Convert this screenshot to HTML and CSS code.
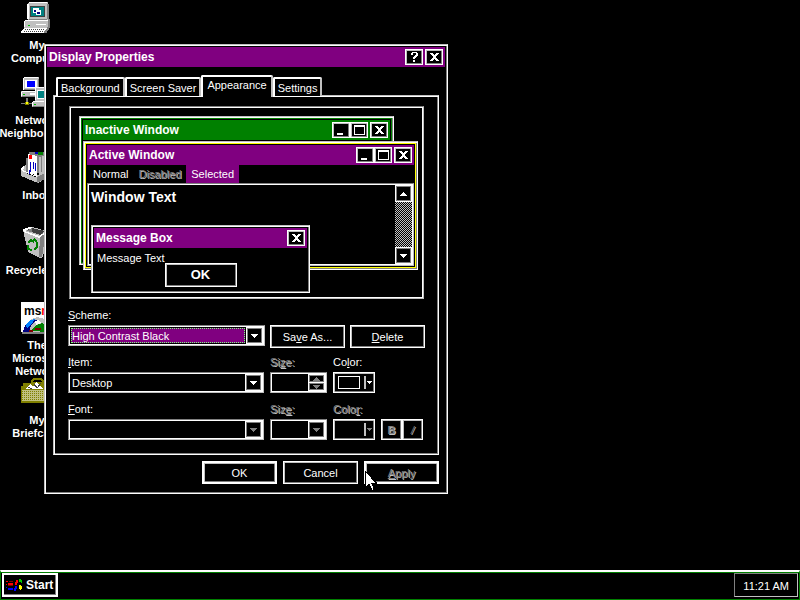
FILE: index.html
```html
<!DOCTYPE html>
<html lang="en">
<head>
<meta charset="utf-8">
<title>Display Properties</title>
<link rel="stylesheet" href="styles.css">
</head>
<body>
<svg class="defs" aria-hidden="true">
  <symbol id="g-min" viewBox="0 0 14 12"><path d="M3 9h6v2H3z"/></symbol>
  <symbol id="g-max" viewBox="0 0 14 12"><path d="M2 1h11v10H2zM3 3v7h9V3z" fill-rule="evenodd"/></symbol>
  <symbol id="g-close" viewBox="0 0 14 12"><path d="M3 2h3v1h1v1h1V3h1V2h3v1h-1v1h-1v1H9v2h1v1h1v1h1v1H9V9H8V8H7v1H6v1H3V9h1V8h1V7h1V5H5V4H4V3H3z"/></symbol>
  <symbol id="g-help" viewBox="0 0 14 12"><path d="M5 1h5v1h1v3h-1v1H9v1H8v1H6V6h1V5h1V4h1V2H6v2H4V2h1zM6 9h2v2H6z"/></symbol>
  <symbol id="g-down" viewBox="0 0 7 4"><path d="M0 0h7v1H6v1H5v1H4v1H3V3H2V2H1V1H0z"/></symbol>
  <symbol id="g-up" viewBox="0 0 7 4"><path d="M3 0h1v1h1v1h1v1h1v1H0V3h1V2h1V1h1z"/></symbol>
  <symbol id="g-small" viewBox="0 0 5 3"><path d="M0 0h5v1H4v1H3v1H2V2H1V1H0z"/></symbol>
</svg>

<main class="desktop">
  <ul class="icons">
    <li><a href="#computer">
      <svg class="icon" viewBox="0 0 32 32" aria-hidden="true">
        <path fill="#c0c0c0" d="M8 0h19v18H7V1h1z"/><path fill="#fff" d="M8 0h18v1H8v16H6V2h2z"/><path fill="#808080" d="M26 2h2v15h-2zM8 17h18v1H8z"/>
        <path fill="#404040" d="M9 4h15v11H9z"/><path fill="#008080" d="M10 5h13v9H10z"/><path fill="#fff" d="M12 6h6v5h-6zM15 8h5v5h-5z"/><path fill="#000080" d="M13 8h2v2h-2zM16 10h3v2h-3z"/>
        <path fill="#c0c0c0" d="M4 19h23v7H3v-6h1z"/><path fill="#fff" d="M4 18h23v1H4v6H3v-6h1z"/><path fill="#808080" d="M27 17h2v7h-2z"/>
        <path d="M15 22h10v1H15z"/><path fill="#00c000" d="M7 23h2v1H7z"/>
        <path fill="#fff" d="M3 26h23v1h-1v1h-1v1h-1v2H0v-2h1v-1h1v-1h1z"/><path fill="#808080" d="M27 24h2v2h-1v2h-1v1h-1v2h-3v-2h1v-1h1v-1h1z"/>
        <path stroke="#404040" stroke-dasharray="1 1" d="M4 27.500h20M3 29.500h20"/>
      </svg>
      <span>My<br>Computer</span></a></li>
    <li><a href="#network">
      <svg class="icon" viewBox="0 0 32 32" aria-hidden="true">
        <path fill="#c0c0c0" d="M3 0h15v13H2V1h1zM0 14h18v6H0z"/><path fill="#fff" d="M3 0h14v1H3v12H2V1h1zM1 14h17v1H1v4H0v-4h1z"/><path fill="#808080" d="M17 2h1v11H3v-1h14zM1 19h17v1H1z"/>
        <path d="M4 3h12v8H4zM9 16h7v2H9z"/><path fill="#00f" d="M6 4h8v6H6z"/><path fill="#00c000" d="M2 17h2v1H2z"/>
        <path fill="#c0c0c0" d="M14 11h17v13H14zM11 25h21v5H11z"/><path fill="#fff" d="M14 10h16v1H15v12h-1zM12 24h20v1H12v4h-1v-4h1z"/><path d="M16 13h13v9H16z"/><path fill="#008080" d="M17 14h11v7H17z"/><path fill="#808080" d="M12 29h20v1H12z"/><path fill="#00c000" d="M13 27h2v1h-2z"/>
        <path fill="#808080" d="M5 21h2v5H5zM0 26h11v1H0z"/><path fill="#808000" d="M4 25h4v3H4z"/><path fill="#ff0" d="M5 25h2v2H5z"/>
      </svg>
      <span>Network<br>Neighborhood</span></a></li>
    <li><a href="#inbox">
      <svg class="icon" viewBox="0 0 32 32" aria-hidden="true">
        <path fill="#808080" d="M8 0h16v3h5v18H5V6h3z"/><path fill="#c0c0c0" d="M0 17l5-4v8l9 4 13-9 4 3v4l-14 8-17-7z"/><path fill="#fff" d="M7 2l9 2v20l-9-4zM0 16l3-2v2l-1 2 14 6v1L1 19z"/>
        <path fill="#808080" d="M16 25l15-8v6l-15 8z"/><path fill="#c0c0c0" d="M18 5h2v18h-2zM21 4h2v18h-2zM24 5h2v15h-2z"/>
        <path fill="#f00" d="M8 3h3v4H8z"/><path fill="#008000" d="M17 0h5v3h-5zM23 2h4v2h-4z"/><path fill="#0000c0" d="M14 0h3v2h-3zM9 10h1v10H9zM12 10h1v7h-1zM14 11h1v8h-1zM8 18h1v4H8z"/>
      </svg>
      <span>Inbox</span></a></li>
    <li><a href="#recycle">
      <svg class="icon" viewBox="0 0 32 32" aria-hidden="true">
        <path fill="#c0c0c0" d="M2 3l9-3 15 4-4 26-3 1L7 25z"/><path fill="#404040" d="M4 3l7-2 13 3-5 4z"/><path fill="#808080" d="M11 1v4L5 4zM19 8l6-4-4 26h-3z"/><path fill="#fff" d="M2 2l9-3v2L4 4l14 5 8-5v1l-8 6L3 5z"/>
        <path fill="none" stroke="#008000" stroke-width="2" d="M7 16l3-3 3 2M7 18v4l4 1M16 15v5l-3 3M13 12l3 3"/>
      </svg>
      <span>Recycle Bin</span></a></li>
    <li><a href="#msn">
      <svg class="icon" viewBox="0 0 32 32" aria-hidden="true">
        <path fill="#808080" d="M1 1h31v31H1z"/><path fill="#fff" d="M0 0h31v30H0z"/>
        <path fill="#c0c0c0" d="M4 24l5-6 7-3 8 2 6 6v7H3z"/><path fill="#000080" d="M2 30l2-6 4-5 5-2 4 2-5 2-3 5v4z"/><path fill="#0080ff" d="M5 23l4-5 5-1-3 5-5 4z"/><path fill="#008000" d="M10 29l4-5 7-3 6 4 1 5z"/><path fill="#800000" d="M14 26h6v2h-6zM8 28h4v2H8z"/><path fill="#fff" d="M14 19l4-1 2 3-5 2z"/>
        <text class="msn" x="3" y="13">ms<tspan fill="#f00">n</tspan></text>
      </svg>
      <span>The<br>Microsoft<br>Network</span></a></li>
    <li><a href="#briefcase">
      <svg class="icon" viewBox="0 0 32 32" aria-hidden="true">
        <path fill="none" stroke="#808000" stroke-width="2" d="M11 6V4l2-2h7l2 2v4"/><path fill="#808000" d="M2 6h9V5h10v2h8v5h2v14H0V9h2z"/>
        <path fill="#c0c080" d="M1 13h30v11H1z"/><path stroke="#808000" stroke-dasharray="1 1" d="M1 14.500h30M1 16.500h30M1 18.500h30M1 20.500h30M1 22.500h30"/>
        <path fill="#fff" d="M4 12l5-5 3 3 3-5 7 6v1z"/><path fill="none" stroke="#404040" d="M13 7l3 4 4-5M7 10l4 2"/>
      </svg>
      <span>My<br>Briefcase</span></a></li>
  </ul>

  <section class="window dialog" aria-labelledby="dlg-title">
    <header class="title">
      <h1 id="dlg-title">Display Properties</h1>
      <button class="cap" aria-label="Help"><svg><use href="#g-help"/></svg></button>
      <button class="cap" aria-label="Close"><svg><use href="#g-close"/></svg></button>
    </header>
    <form class="body">
      <div class="tabs" role="tablist">
        <button type="button" role="tab" class="tab">Background</button>
        <button type="button" role="tab" class="tab">Screen Saver</button>
        <button type="button" role="tab" class="tab current" aria-selected="true">Appearance</button>
        <button type="button" role="tab" class="tab">Settings</button>
      </div>
      <div class="panel" role="tabpanel">
        <div class="preview">
          <div class="window inactive">
            <div class="title green"><h2>Inactive Window</h2>
              <span class="pair"><button type="button" class="cap" aria-label="Minimize"><svg><use href="#g-min"/></svg></button><button type="button" class="cap" aria-label="Maximize"><svg><use href="#g-max"/></svg></button></span>
              <button type="button" class="cap" aria-label="Close"><svg><use href="#g-close"/></svg></button>
            </div>
          </div>
          <div class="window active">
            <div class="title"><h2>Active Window</h2>
              <span class="pair"><button type="button" class="cap" aria-label="Minimize"><svg><use href="#g-min"/></svg></button><button type="button" class="cap" aria-label="Maximize"><svg><use href="#g-max"/></svg></button></span>
              <button type="button" class="cap" aria-label="Close"><svg><use href="#g-close"/></svg></button>
            </div>
            <div class="menu"><span>Normal</span><span class="off">Disabled</span><span class="selected">Selected</span></div>
            <div class="client">
              <p>Window Text</p>
              <div class="scroll">
                <button type="button" class="arrow" aria-label="Scroll up"><svg><use href="#g-up"/></svg></button>
                <button type="button" class="arrow" aria-label="Scroll down"><svg><use href="#g-down"/></svg></button>
              </div>
            </div>
          </div>
          <div class="window message">
            <div class="title"><h2>Message Box</h2>
              <button type="button" class="cap" aria-label="Close"><svg><use href="#g-close"/></svg></button>
            </div>
            <p>Message Text</p>
            <button type="button" class="push ok">OK</button>
          </div>
        </div>

        <div class="fields">
          <div class="row scheme">
            <div class="field">
              <label for="scheme"><u>S</u>cheme:</label>
              <div class="combo"><select id="scheme" class="focus"><option>High Contrast Black</option></select><span class="arrow"><svg><use href="#g-down"/></svg></span></div>
            </div>
            <button type="button" class="push">Sa<u>v</u>e As...</button>
            <button type="button" class="push"><u>D</u>elete</button>
          </div>
          <div class="row">
            <div class="field">
              <label for="item"><u>I</u>tem:</label>
              <div class="combo"><select id="item"><option>Desktop</option></select><span class="arrow"><svg><use href="#g-down"/></svg></span></div>
            </div>
            <div class="field">
              <label for="size" class="off">Si<u>z</u>e:</label>
              <div class="combo"><input id="size" type="text" disabled>
                <span class="spin"><button type="button" disabled aria-label="Increase"><svg><use href="#g-up"/></svg></button><button type="button" disabled aria-label="Decrease"><svg><use href="#g-down"/></svg></button></span>
              </div>
            </div>
            <div class="field">
              <label for="color">Co<u>l</u>or:</label>
              <button type="button" id="color" class="color"><span class="swatch"></span><span class="bar"></span><svg><use href="#g-small"/></svg></button>
            </div>
          </div>
          <div class="row">
            <div class="field">
              <label for="font"><u>F</u>ont:</label>
              <div class="combo dim"><select id="font" disabled><option></option></select><span class="arrow"><svg><use href="#g-down"/></svg></span></div>
            </div>
            <div class="field">
              <label for="fsize" class="off">Siz<u>e</u>:</label>
              <div class="combo dim"><select id="fsize" disabled><option></option></select><span class="arrow"><svg><use href="#g-down"/></svg></span></div>
            </div>
            <div class="field">
              <label for="fcolor" class="off">Colo<u>r</u>:</label>
              <button type="button" id="fcolor" class="color dim" disabled><span class="bar"></span><svg><use href="#g-small"/></svg></button>
            </div>
            <div class="styles">
              <button type="button" class="style off" disabled><b>B</b></button><button type="button" class="style off" disabled><i>/</i></button>
            </div>
          </div>
        </div>
      </div>
      <div class="actions">
        <button type="button" class="push default">OK</button>
        <button type="button" class="push">Cancel</button>
        <button type="button" class="push off default" disabled><u>A</u>pply</button>
      </div>
    </form>
  </section>

  <svg class="cursor" viewBox="0 0 12 20" aria-hidden="true"><path fill="#fff" stroke="#000" stroke-width="1" d="M.5.5v16l3.500-3.500 3 6.500 2.500-1-3-6.500h5z"/></svg>
</main>

<footer class="taskbar">
  <button class="start">
    <svg viewBox="0 0 17 14" aria-hidden="true">
      <path fill="#f00" d="M0 3h2v1H0zM0 6h1v1H0zM2 5h5v2H2zM10 2h2v3h-1v2H9V4h1z"/>
      <path fill="#800000" d="M3 3h4v1H3zM2 7h5v1H2z"/>
      <path fill="#00f" d="M0 9h1v1H0zM2 10h5v2H2zM9 8h2v3h-1v2H8v-3h1z"/>
      <path fill="#0c0" d="M13 1h2v1h1v3h-1V4h-2z"/><path fill="#ff0" d="M13 7h2v1h1v3h-1v1h-1v-1h-1z"/>
    </svg>Start</button>
  <time class="clock">11:21 AM</time>
</footer>
</body>
</html>
```
FILE: styles.css
```css
:root {
  --purple: #800080;
  --green: #008000;
  --light: #c0c0c0;
  --dark: #808080;
}

* { box-sizing: border-box; }

body {
  display: flex;
  flex-direction: column;
  min-height: 100vh;
  margin: 0;
  background: #000;
  color: #fff;
  font: 11px/14px "Liberation Sans", Arial, sans-serif;
}

button, input, select {
  margin: 0;
  padding: 0;
  border: 0;
  border-radius: 0;
  background: #000;
  color: #fff;
  font: inherit;
  opacity: 1;
  appearance: none;
}

h1, h2, p, ul { margin: 0; padding: 0; font-size: inherit; }
svg { display: block; fill: currentColor; shape-rendering: crispEdges; }
.defs { position: absolute; width: 0; height: 0; }

/* Desktop */
.desktop { position: relative; flex: 1; overflow: hidden; }

.icons {
  display: grid;
  grid-template-columns: 74px;
  grid-auto-rows: 75px;
  padding-top: 2px;
  list-style: none;
}
.icons a {
  display: flex;
  flex-direction: column;
  align-items: center;
  gap: 5px;
  color: #fff;
  font-weight: bold;
  line-height: 13px;
  text-align: center;
  text-decoration: none;
}
.icon { width: 32px; height: 32px; flex: none; }
.msn { font: bold 12px "Liberation Sans", Arial, sans-serif; fill: #000; }

/* Windows */
.window {
  border: 1px solid;
  border-color: var(--light) #fff #fff var(--light);
  box-shadow: inset 1px 1px #fff, inset -1px -1px var(--dark);
  padding: 2px;
  background: #000;
}
.dialog { position: absolute; left: 44px; top: 44px; width: 404px; }

.title {
  display: flex;
  align-items: center;
  gap: 2px;
  height: 20px;
  padding: 0 2px;
  background: var(--purple);
  font-size: 12px;
  font-weight: bold;
}
.title.green { background: var(--green); }
.title h1, .title h2 { flex: 1; }
.pair { display: flex; }

.cap {
  display: grid;
  place-items: center;
  width: 18px;
  height: 16px;
  border: 1px solid #fff;
  box-shadow: inset 1px 1px var(--light), inset -1px -1px var(--dark);
}
.cap svg { width: 14px; height: 12px; }

.body { padding: 8px 6px 7px; }

/* Tabs */
.tabs { position: relative; display: flex; align-items: flex-end; margin-bottom: -1px; padding-left: 3px; }
.tab {
  height: 19px;
  padding: 0 3px;
  border: solid #fff;
  border-width: 2px 2px 0;
  border-right-color: var(--light);
  border-radius: 2px 2px 0 0;
}
.tab.current { height: 22px; margin-bottom: -1px; padding: 0 4px 4px; }

.panel {
  padding: 10px 13px 14px 14px;
  border: 1px solid;
  border-color: var(--light) #fff #fff var(--light);
  box-shadow: inset 1px 1px #fff, inset -1px -1px var(--dark);
}

/* Preview */
.preview {
  display: grid;
  align-items: start;
  justify-items: start;
  height: 193px;
  margin: 0 1px 9px;
  border: 1px solid;
  border-color: var(--dark) var(--light) var(--light) var(--dark);
  box-shadow: inset 0 0 0 1px #fff;
}
.preview > .window { grid-area: 1 / 1; }
.inactive {
  width: 315px;
  height: 149px;
  margin: 9px 0 0 9px;
}
.active {
  display: flex;
  flex-direction: column;
  width: 335px;
  height: 129px;
  margin: 34px 0 0 13px;
}
.window.inactive, .window.active { padding: 3px; }
.window.inactive { box-shadow: inset 1px 1px #fff, inset -1px -1px var(--dark), inset 0 0 0 2px var(--green); }
.window.active { box-shadow: inset 1px 1px #fff, inset -1px -1px var(--dark), inset 0 0 0 2px #ff0; }
.message { width: 219px; height: 68px; margin: 118px 0 0 21px; }
.message p { padding: 3px 3px 0; }

.menu { display: flex; padding-left: 1px; line-height: 18px; }
.menu span { padding: 0 5px; }

.client {
  display: flex;
  flex: 1;
  padding: 1px;
  border: 1px solid;
  border-color: var(--dark) var(--light) var(--light) var(--dark);
  box-shadow: inset 0 0 0 1px #fff;
}
.client p { flex: 1; padding: 5px 2px; font-size: 14px; font-weight: bold; }
.scroll {
  display: flex;
  flex-direction: column;
  justify-content: space-between;
  background: repeating-conic-gradient(#000 0 25%, var(--light) 0 50%) 0 0 / 2px 2px;
}

.arrow {
  display: grid;
  place-items: center;
  flex: none;
  width: 17px;
  height: 17px;
  border: 1px solid #fff;
  outline: 1px solid var(--dark);
  outline-offset: -2px;
  background: #000;
}
.arrow svg { width: 7px; height: 4px; }

.selected { background: var(--purple); }
.off { color: var(--dark); text-shadow: 1px 1px var(--light); }

/* Form */
.fields { display: flex; flex-direction: column; gap: 9px; }
.row {
  display: grid;
  grid-template-columns: minmax(0, 1fr) 57px 42px 44px;
  column-gap: 6px;
  align-items: end;
}
.row.scheme {
  grid-template-columns: minmax(0, 1fr) 75px 75px;
  column-gap: 5px;
  align-items: start;
  margin-bottom: -2px;
}
.scheme .push { margin-top: 17px; }
.field { display: flex; flex-direction: column; gap: 3px; }
.field label { align-self: start; }

.combo {
  display: flex;
  height: 21px;
  padding: 1px;
  border: 1px solid;
  border-color: var(--dark) var(--light) var(--light) var(--dark);
  box-shadow: inset 0 0 0 1px #fff;
}
.combo select, .combo input { flex: 1; min-width: 0; margin: 1px; padding-left: 1px; }
.combo .focus { background: var(--purple); outline: 1px dotted #80ff80; outline-offset: -1px; }
.dim svg { color: var(--dark); }

.spin { display: flex; flex-direction: column; width: 17px; border: 1px solid #fff; background: #fff; gap: 1px; }
.spin button { display: grid; place-items: center; flex: 1; min-height: 0; border: 1px solid var(--dark); }
.spin svg { width: 7px; height: 4px; color: var(--dark); }

.color {
  display: flex;
  align-items: center;
  justify-content: flex-end;
  gap: 1px;
  height: 21px;
  padding: 0 2px;
}
.color, .style, .push {
  border: 1px solid #fff;
  box-shadow: inset 1px 1px var(--light), inset -1px -1px var(--dark);
}
.color svg { width: 5px; height: 3px; }
.swatch { width: 22px; height: 13px; margin-right: 3px; border: 1px solid #fff; }
.bar { width: 2px; height: 13px; border: solid; border-width: 0 1px; border-color: var(--dark) var(--light); }

.styles { display: flex; }
.style { width: 21px; height: 21px; }

.push { height: 23px; }
.push.default { border-width: 2px; }
.push.ok {
  display: block;
  width: 72px;
  height: 24px;
  margin: -2px auto 0;
  font-size: 13px;
  font-weight: bold;
}

.actions { display: flex; justify-content: flex-end; gap: 6px; padding-top: 6px; }
.actions .push { width: 75px; }

.cursor { position: absolute; left: 365px; top: 471px; width: 12px; height: 20px; }

/* Taskbar */
.taskbar {
  display: flex;
  justify-content: space-between;
  height: 30px;
  padding: 1px 1px 0;
  border: solid var(--green);
  border-width: 2px 1px 1px;
  border-top-color: #fff;
  box-shadow: inset 0 1px var(--green);
}
.start {
  display: flex;
  align-items: center;
  gap: 3px;
  height: 24px;
  padding: 0 3px 0 2px;
  border: 2px solid #fff;
  box-shadow: inset -1px -1px var(--dark);
  font-size: 12px;
  font-weight: bold;
}
.start svg { width: 17px; height: 14px; }
.clock {
  height: 24px;
  padding: 0 8px;
  border: 1px solid;
  border-color: var(--dark) var(--light) var(--light) var(--dark);
  line-height: 25px;
}
```
